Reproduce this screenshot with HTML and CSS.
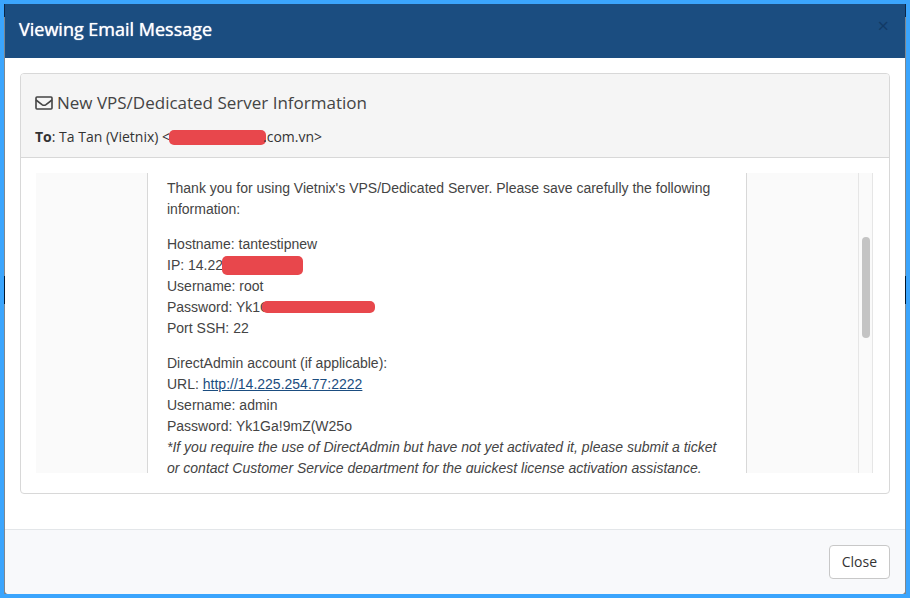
FILE: index.html
```html
<!DOCTYPE html>
<html lang="en">
	<head>
		<meta charset="utf-8">
		<title>Viewing Email Message</title>
		<link rel="stylesheet" href="styles.css">
	</head>
	<body>
		<div class="backdrop">
			<div class="modal" role="dialog" aria-labelledby="modalTitle">
				<header class="modal-header">
					<h1 class="modal-title" id="modalTitle">Viewing Email Message</h1>
					<button type="button" class="modal-dismiss" aria-label="Dismiss">&times;</button>
				</header>

				<main class="modal-body">
					<section class="card">
						<div class="card-header">
							<h2 class="subject">
								<svg class="icon" viewBox="0 0 18 14" aria-hidden="true">
									<rect x="1" y="1" width="16" height="12" rx="1" />
									<path d="M1 4 L7 8.6 Q9 10 11 8.6 L17 4" />
								</svg>
								New VPS/Dedicated Server Information
							</h2>
							<p class="recipient"><strong>To</strong>: Ta Tan (Vietnix) &lt;<span class="redacted redacted-email"></span>.com.vn&gt;</p>
						</div>

						<div class="card-body">
							<div class="viewer">
								<div class="email-bg">
									<article class="email">
										<p>Thank you for using Vietnix's VPS/Dedicated Server. Please save carefully the following information:</p>
										<p>
											Hostname: tantestipnew<br>
											IP: 14.22<span class="redacted redacted-ip"></span><br>
											Username: root<br>
											Password: Yk1G<span class="redacted redacted-password"></span><br>
											Port SSH: 22
										</p>
										<p>
											DirectAdmin account (if applicable):<br>
											URL: <a href="http://14.225.254.77:2222">http://14.225.254.77:2222</a><br>
											Username: admin<br>
											Password: Yk1Ga!9mZ(W25o<br>
											<em>*If you require the use of DirectAdmin but have not yet activated it, please submit a ticket or contact Customer Service department for the quickest license activation assistance.</em>
										</p>
									</article>
								</div>
								<div class="scrollbar"><div class="thumb"></div></div>
							</div>
						</div>
					</section>
				</main>

				<footer class="modal-footer">
					<button type="button" class="btn">Close</button>
				</footer>
			</div>
		</div>
	</body>
</html>
```
FILE: styles.css
```css
* {
	box-sizing: border-box;
}

body {
	margin: 0;
	background: #3ba5fd;
	color: #333;
	font-family: "Open Sans", sans-serif;
	font-size: 14px;
	line-height: 20px;
}

h1, h2, p {
	margin: 0;
}

/* blue window frame, with the dimmed page showing at the sides */
.backdrop {
	display: flex;
	min-height: 100vh;
	padding: 0 1px;
	border: 4px solid #3ba5fd;
	background: linear-gradient(#0c2748 13px, #7e878f 13px, #7e878f 272px, #06182b 272px, #06182b 300px, #7e878f 300px);
}

.modal {
	display: flex;
	flex: 1;
	flex-direction: column;
	min-width: 0;
	background: #fff;
	border-radius: 0 0 4px 4px;
}

.modal-header {
	display: flex;
	justify-content: space-between;
	align-items: flex-start;
	padding: 12px 14px 16px;
	background: #1b4d80;
}

.modal-title {
	color: #fff;
	font-size: 18px;
	font-weight: 500;
	line-height: 26px;
	text-shadow: 0 0 1px #fff;
}

.modal-dismiss {
	padding: 0 2px;
	border: 0;
	background: none;
	color: #123a66;
	font-family: "Open Sans", sans-serif;
	font-size: 20px;
	line-height: 20px;
}

.modal-body {
	flex: 1;
	padding: 15px 15px 35px;
}

.card {
	border: 1px solid #d8d8d8;
	border-radius: 4px;
}

.card-header {
	padding: 15px 14px 10px;
	border-bottom: 1px solid #d8d8d8;
	background: #f5f5f5;
	border-radius: 3px 3px 0 0;
}

.subject {
	display: flex;
	align-items: center;
	gap: 4px;
	margin-bottom: 10px;
	color: #444;
	font-size: 17px;
	font-weight: 400;
	line-height: 28px;
}

.icon {
	width: 18px;
	height: 14px;
	fill: none;
	stroke: #444;
	stroke-width: 1.6;
}

.card-body {
	padding: 15px 16px 20px 15px;
}

.viewer {
	display: flex;
	height: 300px;
	overflow: hidden;
}

.email-bg {
	flex: 1;
	padding: 0 111px;
	background: #fafafa;
}

.email {
	min-height: 100%;
	padding: 5px 19px;
	border: solid #d8d8d8;
	border-width: 0 1px;
	background: #fff;
	color: #444;
	font-family: "Liberation Sans", Arial, sans-serif;
	line-height: 21px;
}

.email p {
	margin-bottom: 14px;
}

.email a {
	color: #1b4d80;
}

.scrollbar {
	width: 15px;
	padding: 64px 2px 0 3px;
	border: solid #e6e6e6;
	border-width: 0 1px;
	background: #fafafa;
}

.thumb {
	width: 8px;
	height: 101px;
	border-radius: 4px;
	background: #c4c4c4;
}

.redacted {
	display: inline-block;
	margin: -6px 0 -4px -1px;
	border-radius: 5px;
	background: #e8474c;
	vertical-align: middle;
}

.redacted-email {
	width: 97px;
	height: 15px;
	margin-right: -3px;
}

.redacted-ip {
	width: 81px;
	height: 19px;
}

/* runs over most of the letter before it */
.redacted-password {
	width: 113px;
	height: 12px;
	margin-left: -9px;
}

.modal-footer {
	display: flex;
	justify-content: flex-end;
	padding: 15px;
	border-top: 1px solid #e3e6e9;
	background: #f8f9fb;
	border-radius: 0 0 4px 4px;
}

.btn {
	padding: 6px 12px;
	border: 1px solid #c8c8c8;
	border-radius: 4px;
	background: #fff;
	color: #333;
	font-family: "Open Sans", sans-serif;
	font-size: 14px;
	line-height: 20px;
}
```
